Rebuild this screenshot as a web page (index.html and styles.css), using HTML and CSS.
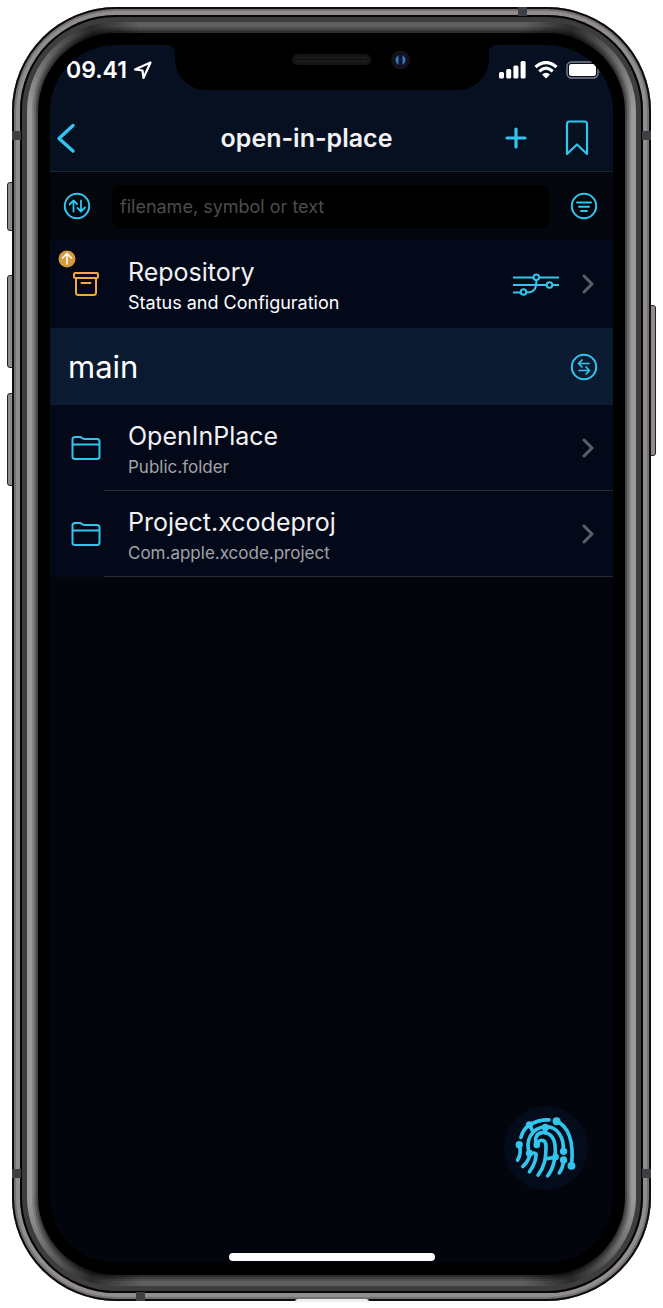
FILE: index.html
```html
<!DOCTYPE html>
<html lang="en">
<head>
    <meta charset="UTF-8">
    <meta name="viewport" content="width=device-width, initial-scale=1.0">
    <title>open-in-place</title>
    <link rel="stylesheet" href="styles.css">
</head>
<body>
    <div class="phone">
        <span class="side-button mute"></span>
        <span class="side-button volume-up"></span>
        <span class="side-button volume-down"></span>
        <span class="side-button power"></span>
        <div class="rim">
            <div class="bezel">
                <div class="screen">
                    <svg class="notch" width="330" height="45" viewBox="0 0 330 45" aria-hidden="true">
                        <path d="M0 0C6 0 8 3 8 8V12C8 32 22 45 40 45H290C308 45 322 32 322 12V8C322 3 324 0 330 0Z" fill="#000"/>
                        <rect x="125" y="9" width="79" height="11" rx="5.500" fill="#141414"/>
                        <path d="M130 12.500h69M130 16.500h69" stroke="#2a2a2a" stroke-dasharray="1 1"/>
                        <circle cx="233.500" cy="15" r="9.500" fill="#131315"/>
                        <circle cx="233.500" cy="15" r="6" fill="#0a1530"/>
                        <path d="M231.500 10q-6 5 0 10zM235.500 10q6 5 0 10z" fill="#3a76b8"/>
                    </svg>

                    <header class="header">
                        <div class="status-bar">
                            <div class="clock">
                                <span>09.41</span>
                                <svg width="18" height="18" viewBox="0 0 18 18" aria-hidden="true">
                                    <path d="M16.500 1.500L1 8.500L8.500 9.500L9.500 17Z" fill="none" stroke="#fff" stroke-width="2.200" stroke-linejoin="round"/>
                                </svg>
                            </div>
                            <div class="status-icons">
                                <svg width="27" height="18" viewBox="0 0 27 18" fill="#fff" aria-hidden="true">
                                    <rect x="0" y="11" width="5" height="6.500" rx="1.500"/>
                                    <rect x="7.200" y="8" width="5" height="9.500" rx="1.500"/>
                                    <rect x="14.400" y="4.500" width="5" height="13" rx="1.500"/>
                                    <rect x="21.600" y="0" width="5" height="17.500" rx="1.500"/>
                                </svg>
                                <svg width="24" height="18" viewBox="0 0 24 18" aria-hidden="true">
                                    <path d="M1.500 6Q12-3 22.500 6M5.300 10.300Q12 4 18.700 10.300" fill="none" stroke="#fff" stroke-width="3.200"/>
                                    <path d="M8 13.500Q12 10 16 13.500L12 17.500Z" fill="#fff"/>
                                </svg>
                                <svg width="36" height="18" viewBox="0 0 36 18" aria-hidden="true">
                                    <rect x="1" y="1" width="31" height="16" rx="4.500" fill="none" stroke="#7d828b" stroke-width="1.400"/>
                                    <rect x="3" y="3" width="27" height="12" rx="2.500" fill="#fff"/>
                                    <path d="M33.500 6v6q4-3 0-6z" fill="#7d828b"/>
                                </svg>
                            </div>
                        </div>
                        <nav class="nav-bar">
                            <button class="icon-btn back" aria-label="Back">
                                <svg width="20" height="32" viewBox="0 0 20 32" fill="none" stroke="currentColor" stroke-width="3.400" stroke-linecap="round" stroke-linejoin="round">
                                    <path d="M17 3.500L3 16.500L17 29"/>
                                </svg>
                            </button>
                            <h1 class="title">open-in-place</h1>
                            <div class="nav-actions">
                                <button class="icon-btn" aria-label="Add">
                                    <svg width="22" height="22" viewBox="0 0 22 22" fill="none" stroke="currentColor" stroke-width="3.200" stroke-linecap="round">
                                        <path d="M11 2v18M2 11h18"/>
                                    </svg>
                                </button>
                                <button class="icon-btn" aria-label="Bookmarks">
                                    <svg width="24" height="36" viewBox="0 0 24 36" fill="none" stroke="currentColor" stroke-width="2.200" stroke-linejoin="round">
                                        <path d="M2 34V4Q2 1.500 4.500 1.500H19.500Q22 1.500 22 4V34L12 24.500Z"/>
                                    </svg>
                                </button>
                            </div>
                        </nav>
                    </header>

                    <div class="search-bar">
                        <button class="icon-btn" aria-label="Sort">
                            <svg width="28" height="28" viewBox="0 0 28 28" fill="none" stroke="currentColor" stroke-width="2" stroke-linecap="round" stroke-linejoin="round">
                                <circle cx="14" cy="14" r="12.200"/>
                                <path d="M10.500 19.500V8.500M6.500 12.500L10.500 8.500L14 12M18 8.500V19.500M14.500 16L18 19.500L22 15.500" stroke-width="1.800"/>
                            </svg>
                        </button>
                        <input type="text" class="search-input" placeholder="filename, symbol or text" aria-label="Search">
                        <button class="icon-btn" aria-label="Filter">
                            <svg width="28" height="28" viewBox="0 0 28 28" fill="none" stroke="currentColor" stroke-width="2" stroke-linecap="round">
                                <circle cx="14" cy="14" r="12.200"/>
                                <path d="M7 10.500h14M9 14.800h10M11 19h6"/>
                            </svg>
                        </button>
                    </div>

                    <main class="content">
                        <a href="#" class="row repository">
                            <span class="row-icon">
                                <svg width="28" height="26" viewBox="0 0 28 26" fill="none" stroke="#f3a93c" stroke-width="2" stroke-linecap="round" stroke-linejoin="round" aria-hidden="true">
                                    <rect x="2" y="2" width="24" height="5" rx="1.200"/>
                                    <path d="M4 7.500V21.500Q4 24 6.500 24H21.500Q24 24 24 21.500V7.500M9.500 12h9"/>
                                </svg>
                                <svg class="badge" width="18" height="18" viewBox="0 0 18 18" fill="none" aria-hidden="true">
                                    <circle cx="9" cy="9" r="8.500" fill="#d79a3c"/>
                                    <path d="M9 14V4M4.500 8L9 3.500L13.500 8" stroke="#fff" stroke-width="1.600" stroke-linecap="round"/>
                                </svg>
                            </span>
                            <span class="row-text">
                                <span class="row-title">Repository</span>
                                <span class="row-subtitle">Status and Configuration</span>
                            </span>
                            <svg class="graph" width="48" height="24" viewBox="0 0 48 24" fill="none" stroke="currentColor" stroke-width="2" aria-hidden="true">
                                <path d="M1 5.500H21M27 5.500H47M1 13H34.500M40.500 13H47M1 20.500H8.500M14.500 20.500C25 20.500 24 13 24.500 8"/>
                                <circle cx="24.300" cy="5.200" r="2.800"/>
                                <circle cx="37.500" cy="13" r="2.800"/>
                                <circle cx="11.500" cy="20" r="2.800"/>
                            </svg>
                            <svg class="chevron" width="12" height="20" viewBox="0 0 12 20" aria-hidden="true">
                                <path d="M2 2L10 10L2 18"/>
                            </svg>
                        </a>

                        <div class="branch">
                            <h2 class="branch-name">main</h2>
                            <button class="icon-btn" aria-label="Switch branch">
                                <svg width="28" height="28" viewBox="0 0 28 28" fill="none" stroke="currentColor" stroke-width="2" stroke-linecap="round" stroke-linejoin="round">
                                    <circle cx="14" cy="14" r="12.200"/>
                                    <path d="M19 10.500H8.500M12 7L8.500 10.500L12 14M9 17.500H19.500M16 14L19.500 17.500L16 21" stroke-width="1.700"/>
                                </svg>
                            </button>
                        </div>

                        <a href="#" class="row file">
                            <span class="row-icon">
                                <svg width="30" height="26" viewBox="0 0 30 26" fill="none" stroke="currentColor" stroke-width="2" stroke-linejoin="round" aria-hidden="true">
                                    <path d="M1.500 9.500V4.500Q1.500 2 4 2H8.500Q10 2 11 3L12 3.700Q12.500 4 13.500 4H26Q28.500 4 28.500 6.500V21.500Q28.500 24 26 24H4Q1.500 24 1.500 21.500V9.500H28.500"/>
                                </svg>
                            </span>
                            <span class="row-text">
                                <span class="row-title">OpenInPlace</span>
                                <span class="row-subtitle">Public.folder</span>
                            </span>
                            <svg class="chevron" width="12" height="20" viewBox="0 0 12 20" aria-hidden="true">
                                <path d="M2 2L10 10L2 18"/>
                            </svg>
                        </a>
                        <a href="#" class="row file">
                            <span class="row-icon">
                                <svg width="30" height="26" viewBox="0 0 30 26" fill="none" stroke="currentColor" stroke-width="2" stroke-linejoin="round" aria-hidden="true">
                                    <path d="M1.500 9.500V4.500Q1.500 2 4 2H8.500Q10 2 11 3L12 3.700Q12.500 4 13.500 4H26Q28.500 4 28.500 6.500V21.500Q28.500 24 26 24H4Q1.500 24 1.500 21.500V9.500H28.500"/>
                                </svg>
                            </span>
                            <span class="row-text">
                                <span class="row-title">Project.xcodeproj</span>
                                <span class="row-subtitle">Com.apple.xcode.project</span>
                            </span>
                            <svg class="chevron" width="12" height="20" viewBox="0 0 12 20" aria-hidden="true">
                                <path d="M2 2L10 10L2 18"/>
                            </svg>
                        </a>
                    </main>

                    <footer class="footer">
                        <button class="fingerprint" aria-label="Unlock">
                            <svg width="84" height="84" viewBox="41 45 254 254" fill="none" stroke="currentColor" stroke-width="11" stroke-linecap="round" stroke-linejoin="round">
                                <path d="M92 140Q99 115 118 102Q145 86 177 87"/>
                                <path d="M118 102L127 120M118 188C104 150 124 112 166 107C203 107 224 140 220 182"/>
                                <path d="M200 91C234 105 254 150 245 226"/>
                                <path d="M87 162Q95 188 82 209"/>
                                <path d="M98 228Q117 210 119 190Q134 184 138 190Q138 216 118 244"/>
                                <path d="M140 163C146 144 166 143 168 165C168 205 163 230 144 254"/>
                                <path d="M140 163C122 118 182 112 193 152Q200 180 192 215Q186 240 173 256M171 204L197 200"/>
                                <path d="M221 208Q220 232 208 247M166 107V127"/>
                                <g fill="currentColor" stroke="none">
                                    <circle cx="118" cy="102" r="11"/>
                                    <circle cx="200" cy="91" r="12"/>
                                    <circle cx="245" cy="226" r="12"/>
                                    <circle cx="87" cy="162" r="11"/>
                                    <circle cx="118" cy="188" r="11"/>
                                    <circle cx="140" cy="163" r="10"/>
                                    <circle cx="166" cy="110" r="11"/>
                                    <circle cx="221" cy="182" r="11"/>
                                    <circle cx="221" cy="208" r="11"/>
                                    <circle cx="197" cy="199" r="10"/>
                                </g>
                            </svg>
                        </button>
                        <div class="home-indicator"></div>
                    </footer>
                </div>
            </div>
        </div>
        <span class="antenna left upper"></span>
        <span class="antenna left lower"></span>
        <span class="antenna right upper"></span>
        <span class="antenna right lower"></span>
        <span class="antenna top"></span>
        <span class="antenna bottom"></span>
        <span class="port"></span>
    </div>
</body>
</html>
```
FILE: styles.css
```css
* {
    margin: 0;
    padding: 0;
    box-sizing: border-box;
}

body {
    min-height: 100vh;
    padding: 7px 12px;
    display: flex;
    background: #fff;
    color: #f2f2f4;
    font-family: Inter, 'Liberation Sans', sans-serif;
}

svg {
    display: block;
    flex-shrink: 0;
}

/* Phone body */
.phone {
    position: relative;
    flex: 1;
    display: flex;
    padding: 8px;
    border-radius: 104px;
    background: #918c8d;
    box-shadow: inset 0 0 0 2px #0c0c0c, inset 0 0 0 4px #757172;
}

.rim {
    flex: 1;
    display: flex;
    padding: 7px;
    border-radius: 96px;
    background: #3d3d3d;
    box-shadow: inset 0 0 0 2px #050505;
}

.bezel {
    flex: 1;
    display: flex;
    padding: 23px;
    border-radius: 89px;
    background: conic-gradient(#5e5e5e 17deg, #2a2a2a 21deg, #9a9a9a 29deg, #9a9a9a 151deg, #2a2a2a 159deg, #5e5e5e 163deg, #5e5e5e 197deg, #2a2a2a 201deg, #9a9a9a 209deg, #9a9a9a 331deg, #2a2a2a 339deg, #5e5e5e 343deg);
}

.screen {
    position: relative;
    flex: 1;
    min-width: 0;
    display: flex;
    flex-direction: column;
    overflow: hidden;
    border-radius: 66px;
    background: #02050c;
    box-shadow: 0 0 0 12px #000, 0 0 0 14px rgba(0, 0, 0, 0.3), 0 0 0 16px rgba(0, 0, 0, 0.2), 0 0 0 18px rgba(0, 0, 0, 0.15);
}

.side-button {
    position: absolute;
    z-index: -1;
    left: -5px;
    width: 8px;
    border: 1px solid #222;
    border-radius: 3px;
    background: #8f8b8c;
}

.mute {
    top: 175px;
    height: 49px;
}

.volume-up {
    top: 268px;
    height: 93px;
}

.volume-down {
    top: 386px;
    height: 93px;
}

.power {
    top: 298px;
    left: auto;
    right: -5px;
    height: 151px;
}

.antenna {
    position: absolute;
    width: 9px;
    height: 9px;
    background: #3c4044;
}

.antenna.left {
    left: 0;
}

.antenna.right {
    right: 0;
}

.antenna.upper {
    top: 124px;
}

.antenna.lower {
    bottom: 123px;
}

.antenna.top {
    top: 0;
    right: 124px;
}

.antenna.bottom {
    bottom: 0;
    left: 124px;
}

.port {
    position: absolute;
    bottom: -1px;
    left: 50%;
    width: 74px;
    height: 3px;
    margin-left: -37px;
    border-radius: 8px 8px 0 0;
    background: #eee;
}

.notch {
    position: absolute;
    top: 0;
    left: 50%;
    margin-left: -165px;
}

/* Header */
.header {
    background: #061020;
    border-bottom: 1px solid #1b242f;
}

.status-bar {
    height: 50px;
    padding: 0 11px 0 16px;
    display: flex;
    justify-content: space-between;
    align-items: center;
}

.clock {
    display: flex;
    align-items: center;
    gap: 7px;
    color: #fff;
    font-size: 23px;
    font-weight: 600;
}

.status-icons {
    display: flex;
    align-items: center;
    gap: 8px;
}

.nav-bar {
    height: 76px;
    padding: 10px 24px 0 6px;
    display: flex;
    align-items: center;
}

.title {
    flex: 1;
    font-size: 25px;
    font-weight: 600;
    line-height: 32px;
    text-align: center;
}

.nav-actions {
    display: flex;
    align-items: center;
    gap: 38px;
}

.icon-btn {
    border: none;
    background: none;
    color: #32c5ee;
    cursor: pointer;
}

.back {
    width: 52px;
}

/* Search */
.search-bar {
    height: 68px;
    padding: 0 15px 0 13px;
    display: flex;
    align-items: center;
    gap: 21px;
    background: #03060c;
}

.search-input {
    flex: 1;
    min-width: 0;
    height: 43px;
    padding: 0 8px;
    border: none;
    border-radius: 8px;
    outline: none;
    background: #000;
    color: #f2f2f4;
    font-family: inherit;
    font-size: 18px;
}

.search-input::placeholder {
    color: #4c4c4f;
    opacity: 1;
}

/* List */
.content {
    flex: 1;
}

.row {
    position: relative;
    height: 86px;
    padding: 0 19px 0 20px;
    display: flex;
    align-items: center;
    background: #040919;
    color: #32c5ee;
    text-decoration: none;
}

.repository {
    height: 88px;
}

.row-icon {
    position: relative;
    width: 58px;
    padding-left: 1px;
}

.repository .row-icon {
    padding-left: 2px;
}

.badge {
    position: absolute;
    top: -21px;
    left: -12px;
}

.row-text {
    flex: 1;
    padding-top: 3px;
    display: flex;
    flex-direction: column;
}

.row-title {
    color: #f2f2f4;
    font-size: 25px;
    line-height: 34px;
}

.row-subtitle {
    color: #a3a3a6;
    font-size: 17px;
    line-height: 28px;
}

.repository .row-subtitle {
    color: #fff;
    font-size: 18px;
}

.graph {
    margin-right: 22px;
}

.chevron path {
    fill: none;
    stroke: #5b5f6b;
    stroke-width: 3;
    stroke-linecap: round;
    stroke-linejoin: round;
}

.file::after {
    content: "";
    position: absolute;
    right: 0;
    bottom: 0;
    left: 54px;
    height: 1px;
    background: #2a2c33;
}

.branch {
    height: 77px;
    padding: 0 15px 0 18px;
    display: flex;
    justify-content: space-between;
    align-items: center;
    background: #0a1b31;
}

.branch-name {
    color: #fff;
    font-size: 31px;
    font-weight: 400;
    line-height: 40px;
}

/* Footer */
.footer {
    display: flex;
    flex-direction: column;
}

.fingerprint {
    align-self: flex-end;
    margin: 0 25px 63px 0;
    border: none;
    border-radius: 50%;
    background: #040b1a;
    color: #32c5ee;
    cursor: pointer;
}

.home-indicator {
    align-self: center;
    width: 206px;
    height: 8px;
    margin-bottom: 2px;
    border-radius: 4px;
    background: #fff;
}
```
